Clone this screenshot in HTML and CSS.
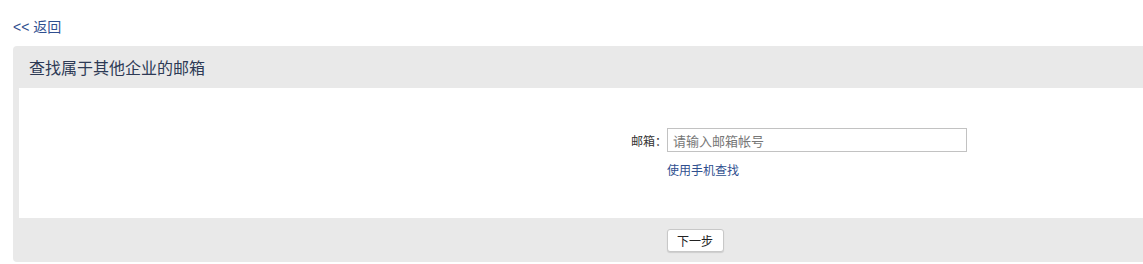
FILE: index.html
```html
<!DOCTYPE html>
<html lang="zh-CN">
<head>
<meta charset="utf-8">
<title>查找属于其他企业的邮箱</title>
<link rel="stylesheet" href="styles.css">
</head>
<body>
<div class="page">
  <a class="back" href="#">&lt;&lt; 返回</a>
  <div class="panel">
    <div class="panel-title">查找属于其他企业的邮箱</div>
    <div class="panel-body">
      <div class="form-row">
        <label class="label" for="mail">邮箱：</label>
        <input id="mail" class="input" type="text" placeholder="请输入邮箱帐号">
      </div>
      <div class="form-row">
        <span></span>
        <a class="link" href="#">使用手机查找</a>
      </div>
    </div>
    <div class="panel-foot">
      <button class="btn" type="button">下一步</button>
    </div>
  </div>
</div>
</body>
</html>
```
FILE: styles.css
```css
html, body {
  margin: 0;
  padding: 0;
  background: #fff;
  overflow: hidden;
}
body {
  font-family: "Noto Sans CJK SC", "Liberation Sans", sans-serif;
  color: #333;
}
.page {
  padding: 17px 0 0 13px;
}
.back {
  display: block;
  font-size: 14px;
  line-height: 20px;
  color: #2f4f8f;
  text-decoration: none;
  font-family: "Liberation Sans", "Noto Sans CJK SC", sans-serif;
}
.panel {
  margin-top: 9px;
  width: 1366px;
  background: #e9e9e9;
  border-radius: 4px;
  padding: 0 6px;
  box-sizing: border-box;
}
.panel-title {
  height: 42px;
  line-height: 42px;
  padding-left: 10px;
  font-size: 16px;
  color: #2d3a55;
}
.panel-body {
  background: #fff;
  height: 130px;
  box-sizing: border-box;
  padding-top: 40px;
}
.form-row {
  display: grid;
  grid-template-columns: 648px 300px;
  align-items: center;
}
.label {
  text-align: right;
  font-size: 12px;
  color: #333;
  padding-right: 0;
}
.input {
  width: 300px;
  height: 24px;
  box-sizing: border-box;
  border: 1px solid #c2c2c2;
  padding: 0 5px;
  font-size: 13px;
  font-family: "Noto Sans CJK SC", sans-serif;
  color: #333;
  outline: none;
  margin: 0;
}
.input::placeholder {
  color: #777;
}
.link {
  margin-top: 9px;
  font-size: 12px;
  line-height: 18px;
  color: #2f4f8f;
  text-decoration: none;
}
.panel-foot {
  height: 44px;
  display: flex;
  align-items: center;
  justify-content: center;
}
.btn {
  width: 57px;
  height: 23px;
  background: #fff;
  border: 1px solid #c8c8c8;
  border-radius: 3px;
  box-shadow: 0 1px 1px rgba(0,0,0,0.12);
  font-size: 12px;
  font-family: "Noto Sans CJK SC", sans-serif;
  color: #222;
  padding: 0;
  margin-left: -2px;
}
```
